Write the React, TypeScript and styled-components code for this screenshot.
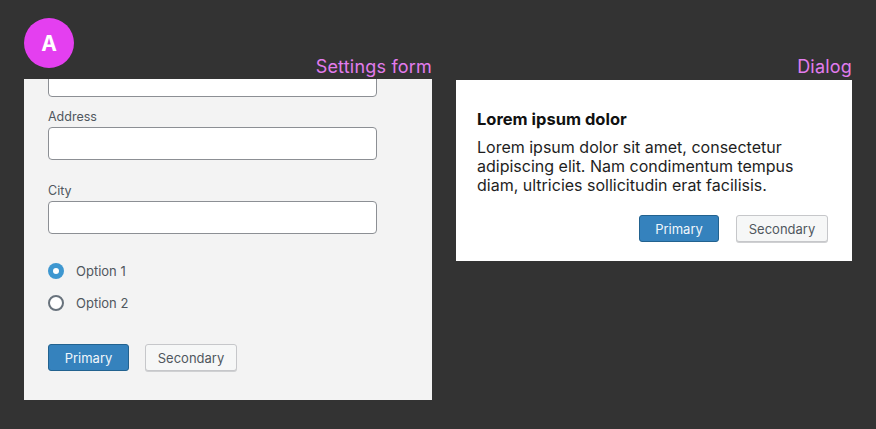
import styled, { createGlobalStyle } from 'styled-components';

const GlobalStyle = createGlobalStyle`
	html, body {
		margin: 0;
		padding: 0;
		background: #333333;
	}
	body {
		font-family: Inter, "Noto Sans", sans-serif;
		-webkit-font-smoothing: antialiased;
	}
	* {
		box-sizing: border-box;
	}
`;

const Page = styled.div`
	display: flex;
	gap: 24px;
	padding: 18px 24px 0;
	width: 876px;
	height: 429px;
`;

const Column = styled.section<{ $width: number }>`
	display: flex;
	flex-direction: column;
	width: ${(props) => props.$width}px;
`;

const Header = styled.header<{ $offset: number }>`
	display: flex;
	align-items: flex-end;
	justify-content: space-between;
	height: ${(props) => props.$offset}px;
`;

const Badge = styled.div`
	width: 50px;
	height: 50px;
	border-radius: 50%;
	background: #e43ff0;
	color: #fff;
	font-weight: 700;
	font-size: 21px;
	display: flex;
	align-items: center;
	justify-content: center;
	align-self: flex-start;
`;

const SectionTitle = styled.h2`
	margin: 0 0 2px auto;
	font-size: 18px;
	line-height: 21px;
	font-weight: 400;
	color: #e27cee;
	letter-spacing: 0.2px;
`;

const FormPanel = styled.div`
	background: #f3f3f3;
	height: 321px;
	overflow: hidden;
	padding: 0 55px 0 24px;
`;

const Field = styled.div<{ $space: number; $pull?: number }>`
	display: flex;
	flex-direction: column;
	margin-top: ${(props) => -(props.$pull ?? 0)}px;
	margin-bottom: ${(props) => props.$space}px;
`;

const Label = styled.label`
	font-size: 12.5px;
	line-height: 18px;
	color: #50575e;
	margin-bottom: 1px;
`;

const Input = styled.input`
	height: 33px;
	width: 100%;
	border: 1px solid #8c8f94;
	border-radius: 4px;
	background: #fff;
	outline: none;
`;

const RadioGroup = styled.div`
	display: flex;
	flex-direction: column;
	gap: 16px;
	margin-top: 29px;
	margin-bottom: 33px;
`;

const RadioRow = styled.label`
	display: flex;
	align-items: center;
	gap: 12px;
	font-size: 13px;
	line-height: 16px;
	color: #50575e;
`;

const RadioDot = styled.span<{ $checked?: boolean }>`
	width: 16px;
	height: 16px;
	border-radius: 50%;
	background: ${(props) => (props.$checked ? '#3e97d0' : '#fff')};
	border: ${(props) => (props.$checked ? 'none' : '2px solid #68727c')};
	display: flex;
	align-items: center;
	justify-content: center;
	&::after {
		content: '';
		display: ${(props) => (props.$checked ? 'block' : 'none')};
		width: 6px;
		height: 6px;
		border-radius: 50%;
		background: #fff;
	}
`;

const ButtonRow = styled.div<{ $end?: boolean; $gap: number }>`
	display: flex;
	gap: ${(props) => props.$gap}px;
	justify-content: ${(props) => (props.$end ? 'flex-end' : 'flex-start')};
`;

const Button = styled.button<{ $primary?: boolean; $width: number }>`
	width: ${(props) => props.$width}px;
	height: 27px;
	padding: 0;
	font-family: inherit;
	font-size: 13px;
	border-radius: 3px;
	cursor: pointer;
	background: ${(props) => (props.$primary ? '#3582bd' : '#f6f7f7')};
	color: ${(props) => (props.$primary ? '#f0f6fb' : '#50575e')};
	border: 1px solid ${(props) => (props.$primary ? '#22628f' : '#c6c7ca')};
	box-shadow: ${(props) => (props.$primary ? 'none' : '0 1px 0 #cfd0d2')};
`;

const Dialog = styled.div`
	background: #fff;
	margin-top: 1px;
	padding: 29px 24px 19px 21px;
`;

const DialogTitle = styled.h3`
	margin: 0 0 8px;
	font-size: 16.5px;
	line-height: 21px;
	font-weight: 700;
	color: #111;
`;

const DialogBody = styled.p`
	margin: 0 0 20px;
	font-size: 16px;
	line-height: 19px;
	color: #1e1e1e;
	max-width: 340px;
`;

function App() {
	return (
		<>
			<GlobalStyle />
			<Page>
				<Column $width={408}>
					<Header $offset={61}>
						<Badge>A</Badge>
						<SectionTitle>Settings form</SectionTitle>
					</Header>
					<FormPanel>
						<Field $space={11} $pull={15}>
							<Input aria-label="Name" />
						</Field>
						<Field $space={22}>
							<Label>Address</Label>
							<Input />
						</Field>
						<Field $space={0}>
							<Label>City</Label>
							<Input />
						</Field>
						<RadioGroup>
							<RadioRow>
								<RadioDot $checked />
								Option 1
							</RadioRow>
							<RadioRow>
								<RadioDot />
								Option 2
							</RadioRow>
						</RadioGroup>
						<ButtonRow $gap={16}>
							<Button $primary $width={81}>
								Primary
							</Button>
							<Button $width={92}>Secondary</Button>
						</ButtonRow>
					</FormPanel>
				</Column>
				<Column $width={396}>
					<Header $offset={61}>
						<SectionTitle>Dialog</SectionTitle>
					</Header>
					<Dialog>
						<DialogTitle>Lorem ipsum dolor</DialogTitle>
						<DialogBody>
							Lorem ipsum dolor sit amet, consectetur adipiscing elit. Nam
							condimentum tempus diam, ultricies sollicitudin erat facilisis.
						</DialogBody>
						<ButtonRow $end $gap={17}>
							<Button $primary $width={80}>
								Primary
							</Button>
							<Button $width={92}>Secondary</Button>
						</ButtonRow>
					</Dialog>
				</Column>
			</Page>
		</>
	);
}

export default App;
